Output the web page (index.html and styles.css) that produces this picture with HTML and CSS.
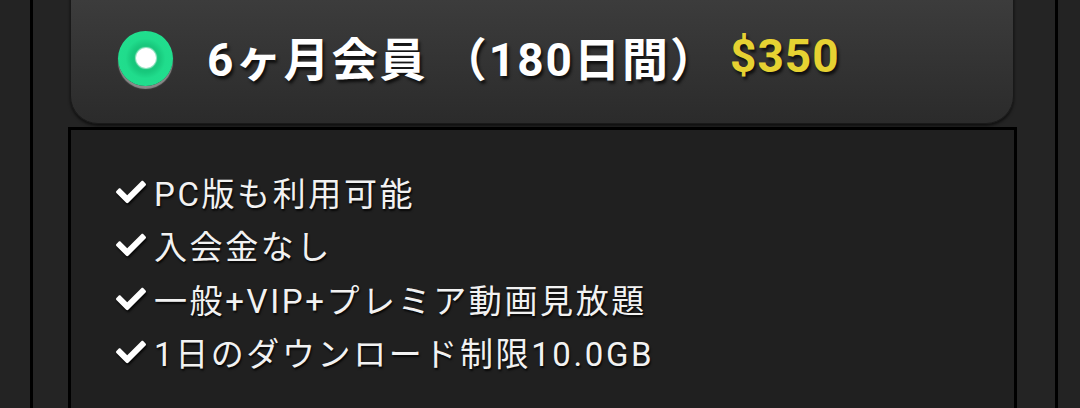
FILE: index.html
```html
<!DOCTYPE html>
<html lang="ja">
<head>
    <meta charset="UTF-8">
    <meta name="viewport" content="width=device-width, initial-scale=1.0">
    <title>会員プラン</title>
    <link rel="stylesheet" href="styles.css">
</head>
<body>

    <div class="wrap">
        <!-- プラン選択 -->
        <div class="plan">
            <span class="radio"><span class="dot"></span></span>
            <span class="plan-name">6ヶ月会員 （180日間）</span>
            <span class="price">$350</span>
        </div>

        <!-- 特典 -->
        <ul class="perks">
            <li><svg class="check" viewBox="0 0 512 512"><path d="M173.9 439.4L7.5 273c-10-10-10-26.2 0-36.2l36.2-36.2c10-10 26.2-10 36.2 0L192 312.7 432.1 72.6c10-10 26.2-10 36.2 0l36.2 36.2c10 10 10 26.2 0 36.2L210.1 439.4c-10 10-26.2 10-36.2 0z"/></svg>PC版も利用可能</li>
            <li><svg class="check" viewBox="0 0 512 512"><path d="M173.9 439.4L7.5 273c-10-10-10-26.2 0-36.2l36.2-36.2c10-10 26.2-10 36.2 0L192 312.7 432.1 72.6c10-10 26.2-10 36.2 0l36.2 36.2c10 10 10 26.2 0 36.2L210.1 439.4c-10 10-26.2 10-36.2 0z"/></svg>入会金なし</li>
            <li><svg class="check" viewBox="0 0 512 512"><path d="M173.9 439.4L7.5 273c-10-10-10-26.2 0-36.2l36.2-36.2c10-10 26.2-10 36.2 0L192 312.7 432.1 72.6c10-10 26.2-10 36.2 0l36.2 36.2c10 10 10 26.2 0 36.2L210.1 439.4c-10 10-26.2 10-36.2 0z"/></svg>一般+VIP+プレミア動画見放題</li>
            <li><svg class="check" viewBox="0 0 512 512"><path d="M173.9 439.4L7.5 273c-10-10-10-26.2 0-36.2l36.2-36.2c10-10 26.2-10 36.2 0L192 312.7 432.1 72.6c10-10 26.2-10 36.2 0l36.2 36.2c10 10 10 26.2 0 36.2L210.1 439.4c-10 10-26.2 10-36.2 0z"/></svg>1日のダウンロード制限10.0GB</li>
        </ul>
    </div>

</body>
</html>
```

FILE: styles.css
```css
html, body { margin: 0; background: #232323; }
body { font-family: Roboto, "Noto Sans CJK JP", sans-serif; color: #fff; }

.wrap { margin-left: 30px; width: 946px; height: 408px; overflow: hidden; border-left: 3px solid #000; border-right: 3px solid #000; padding: 0 38px 0 38px; background: #242424; }

.plan { display: flex; align-items: center; height: 154px; margin: -30px 3px 0 -1px; padding: 24px 0 0 47px; box-sizing: border-box; border: 1px solid #191919; border-radius: 28px; background: linear-gradient(#404040, #2b2b2b); box-shadow: 0 2px 3px rgba(0,0,0,0.6); }
.radio { width: 55px; height: 55px; margin-bottom: 2px; border-radius: 50%; background: radial-gradient(circle, #0fb86e 0, #18c97d 14px, #20dc8c 20px, #22e090 100%); box-shadow: 0 3px 1px #8a8a8a; display: flex; align-items: center; justify-content: center; flex-shrink: 0; }
.dot { width: 20px; height: 20px; border-radius: 50%; background: #fff; box-shadow: 0 0 1px 1px rgba(255,255,255,0.6); }
.plan-name { margin: 0 0 6px 34px; font-size: 46px; font-weight: bold; letter-spacing: 2px; text-shadow: 2px 3px 3px rgba(0,0,0,0.7); white-space: nowrap; }
.price { margin: 0 0 6px 12px; font-size: 46px; font-weight: bold; letter-spacing: 1px; color: #e6d232; text-shadow: 2px 3px 3px rgba(0,0,0,0.7); }

.perks { list-style: none; margin: 3px 0 0 -3px; padding: 35px 0 30px 45px; border: 3px solid #000; border-bottom: none; background: #202020; }
.perks li { display: flex; align-items: center; height: 53.5px; font-size: 33px; letter-spacing: 2.6px; color: #f2f2f2; text-shadow: 1px 2px 2px rgba(0,0,0,0.8); white-space: nowrap; }
.check { width: 30px; height: 30px; fill: #fff; margin-right: 8px; filter: drop-shadow(1px 2px 1px rgba(0,0,0,0.8)); }
```
